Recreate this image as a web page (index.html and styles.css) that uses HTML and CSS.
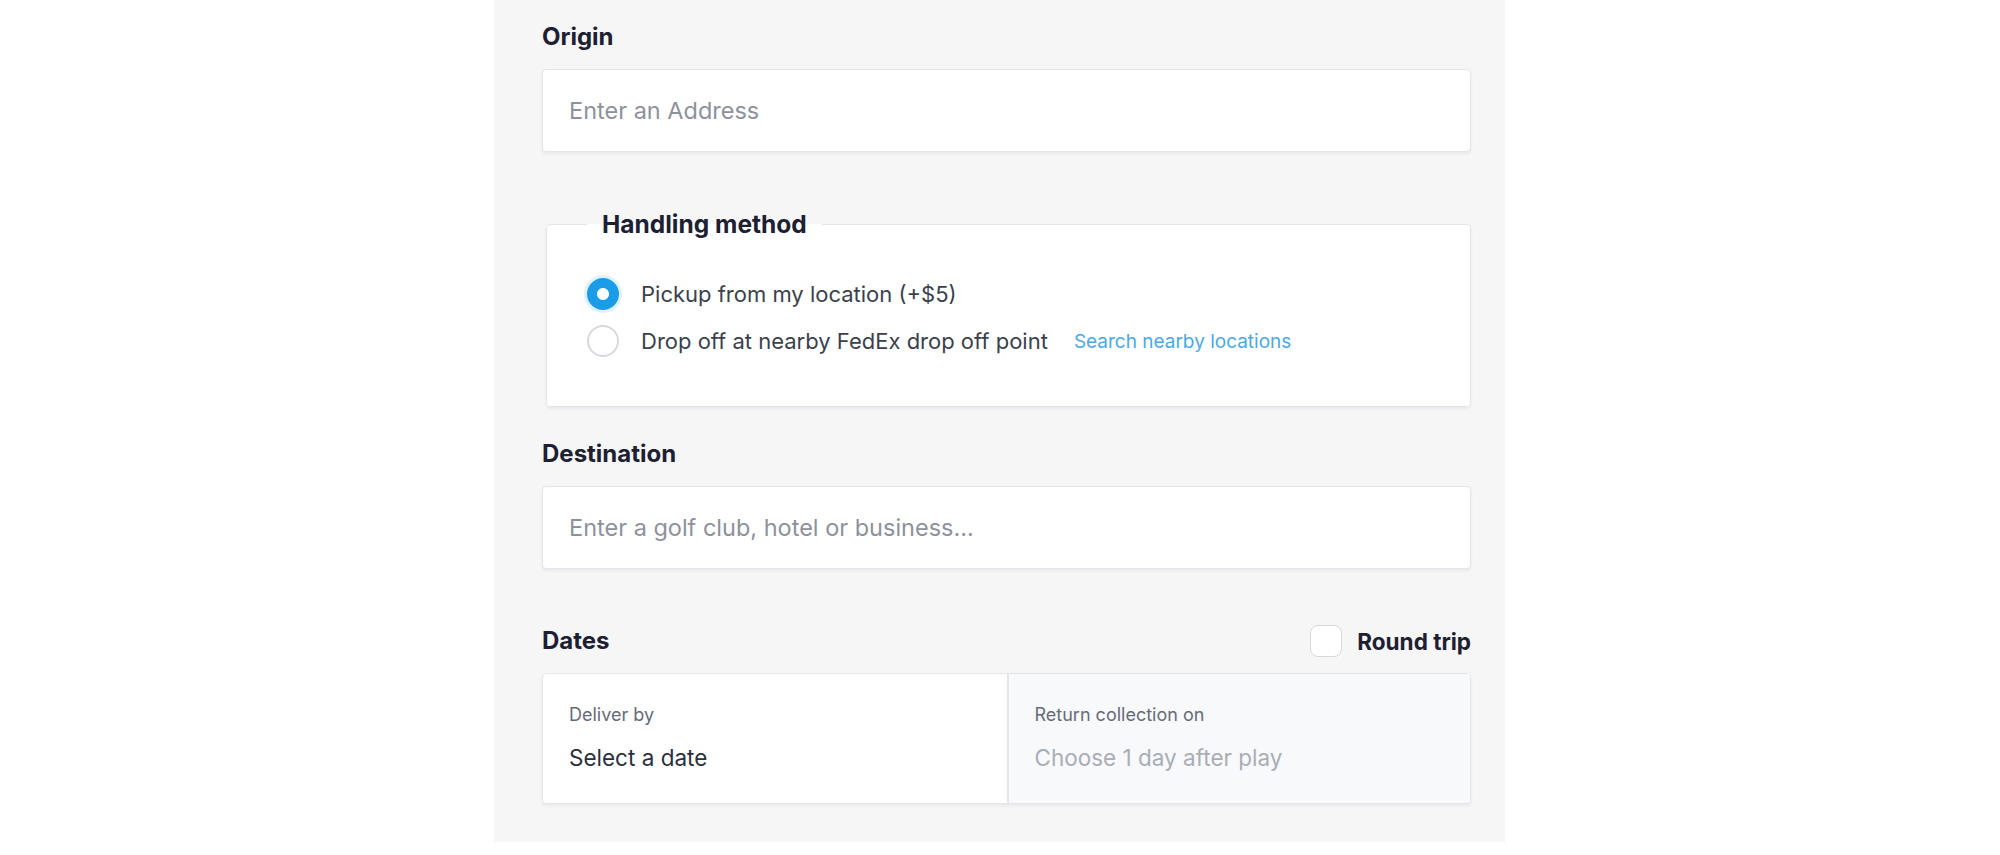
FILE: index.html
```html
<!DOCTYPE html>
<html lang="en">
<head>
    <meta charset="UTF-8">
    <meta name="viewport" content="width=device-width, initial-scale=1.0">
    <title>Book shipment</title>
    <link rel="stylesheet" href="styles.css">
</head>
<body>
    <main class="panel">
        <div class="field">
            <label class="field-label" for="origin">Origin</label>
            <input class="text-input" id="origin" type="text" placeholder="Enter an Address">
        </div>

        <fieldset class="handling">
            <legend>Handling method</legend>
            <label class="radio-row">
                <span class="radio checked"></span>
                Pickup from my location (+$5)
            </label>
            <label class="radio-row">
                <span class="radio"></span>
                Drop off at nearby FedEx drop off point
                <a class="link" href="#">Search nearby locations</a>
            </label>
        </fieldset>

        <div class="field destination">
            <label class="field-label" for="destination">Destination</label>
            <input class="text-input" id="destination" type="text" placeholder="Enter a golf club, hotel or business...">
        </div>

        <div class="field dates-field">
            <div class="dates-head">
                <span class="field-label">Dates</span>
                <label class="round-trip">
                    <span class="checkbox"></span>
                    Round trip
                </label>
            </div>
            <div class="dates">
                <div class="date-cell">
                    <div class="date-label">Deliver by</div>
                    <div class="date-value">Select a date</div>
                </div>
                <div class="date-cell disabled">
                    <div class="date-label">Return collection on</div>
                    <div class="date-value">Choose 1 day after play</div>
                </div>
            </div>
        </div>
    </main>
</body>
</html>
```

FILE: styles.css
```css
body {
    margin: 0;
    background: #ffffff;
    font-family: "Inter", "Liberation Sans", sans-serif;
    color: #1d2133;
}

.panel {
    width: 1011px;
    margin-left: 494px;
    box-sizing: border-box;
    padding: 23px 34px 38px 48px;
    background: #f6f6f6;
}

.field-label {
    display: block;
    font-size: 24px;
    line-height: 28px;
    font-weight: 700;
    color: #1c2032;
}

.field > .field-label {
    margin-bottom: 18px;
}

.text-input {
    display: block;
    width: 100%;
    height: 83px;
    box-sizing: border-box;
    padding: 0 26px;
    border: 1px solid #e3e5ea;
    border-radius: 4px;
    background: #ffffff;
    box-shadow: 0 2px 3px rgba(30, 35, 60, 0.06);
    font-family: inherit;
    font-size: 23.5px;
    color: #2b2f3d;
    outline: none;
}

.text-input::placeholder {
    color: #8d919b;
}

/* handling method box */
.handling {
    margin: 58px 0 0 4px;
    padding: 39px 40px 48px;
    border: 1px solid #e3e5ea;
    border-radius: 4px;
    background: #ffffff;
    box-shadow: 0 2px 3px rgba(30, 35, 60, 0.06);
    display: flex;
    flex-direction: column;
    gap: 13px;
}

.handling legend {
    padding: 0 15px;
    font-size: 24.5px;
    line-height: 28px;
    font-weight: 700;
    color: #1c2032;
}

.radio-row {
    display: flex;
    align-items: center;
    height: 34px;
    font-size: 22px;
    color: #3b3f4e;
}

.radio {
    width: 32px;
    height: 32px;
    box-sizing: border-box;
    border: 2px solid #d7d9de;
    border-radius: 50%;
    background: #ffffff;
    margin-right: 22px;
    flex-shrink: 0;
}

.radio.checked {
    border: none;
    background: radial-gradient(circle, #ffffff 0 5.5px, #1a9ce8 6.5px);
    box-shadow: 0 0 0 3px rgba(26, 156, 232, 0.14);
}

.link {
    margin-left: 26px;
    font-size: 19px;
    color: #4aa9e6;
    text-decoration: none;
}

.destination {
    margin-top: 33px;
}

/* dates */
.dates-field {
    margin-top: 56px;
}

.dates-head {
    display: flex;
    align-items: center;
    justify-content: space-between;
    margin-bottom: 16px;
}

.round-trip {
    display: flex;
    align-items: center;
    gap: 15px;
    font-size: 22.5px;
    font-weight: 700;
    color: #1c2032;
}

.checkbox {
    width: 32px;
    height: 32px;
    box-sizing: border-box;
    border: 1.5px solid #d7d9de;
    border-radius: 8px;
    background: #ffffff;
}

.dates {
    display: grid;
    grid-template-columns: 1fr 1fr;
    border: 1px solid #e3e5ea;
    border-radius: 4px;
    background: #ffffff;
    box-shadow: 0 2px 3px rgba(30, 35, 60, 0.06);
    overflow: hidden;
}

.date-cell {
    padding: 30px 26px 31px;
}

.date-cell.disabled {
    background: #f8f9fb;
    border-left: 2px solid #e6e7eb;
}

.date-label {
    font-size: 18px;
    line-height: 22px;
    color: #676b78;
    margin-bottom: 18px;
}

.date-value {
    font-size: 22.5px;
    line-height: 28px;
    color: #2b2f3d;
}

.disabled .date-value {
    color: #a9adb6;
}
```
